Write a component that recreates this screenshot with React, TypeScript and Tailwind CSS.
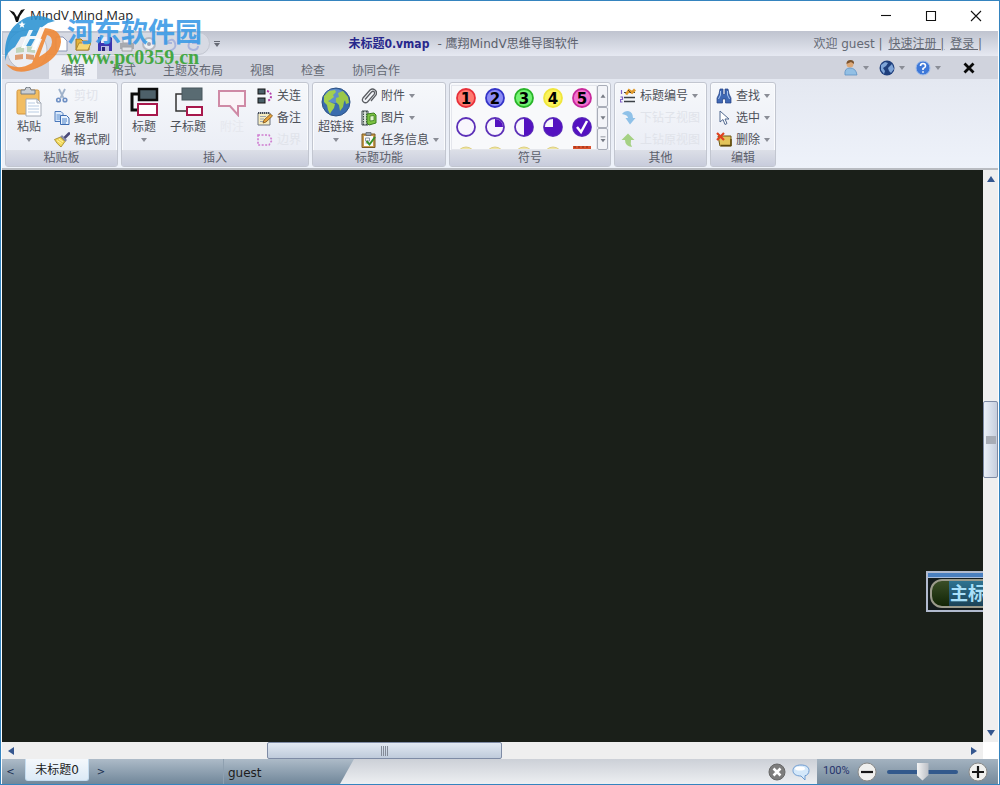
import type { ReactNode } from "react";

const uiFont = "font-['DejaVu_Sans','Noto_Sans_CJK_SC',sans-serif]";

const Arrow = ({ className = "" }: { className?: string }) => (
  <svg viewBox="0 0 6 4" className={`w-[6px] h-[4px] shrink-0 ${className}`}>
    <path d="M0 0h6L3 4z" fill="#8a8d96" />
  </svg>
);

const Icon = ({ children, size = "w-4 h-4" }: { children: ReactNode; size?: string }) => (
  <svg viewBox="0 0 16 16" className={`${size} shrink-0`} fill="none">{children}</svg>
);

/* ---------- small icons ---------- */

const CutIcon = () => (
  <Icon>
    <path d="M5 1l4.500 9M11 1L6.500 10" stroke="#9fb2cb" strokeWidth="1.8" />
    <circle cx="4.500" cy="12" r="1.800" stroke="#6f90c4" strokeWidth="1.6" />
    <circle cx="11" cy="12" r="1.800" stroke="#6f90c4" strokeWidth="1.6" />
  </Icon>
);

const CopyIcon = () => (
  <Icon>
    <path d="M1 1.500h6l2 2v8H1z" fill="#dbe9fa" stroke="#4a78bb" />
    <path d="M2.500 5h4M2.500 7h4M2.500 9h4" stroke="#5b8ed0" />
    <path d="M6.500 5.500h6l2.500 2.500v6.500H6.500z" fill="#e8f2fd" stroke="#3d6cb2" />
    <path d="M8 9h5M8 11h5M8 13h4" stroke="#4a80c8" />
  </Icon>
);

const BrushIcon = () => (
  <Icon>
    <path d="M15 1.500l-4 4" stroke="#4b4a78" strokeWidth="2.600" strokeLinecap="round" />
    <path d="M8 3.500l4.500 4.500-1.500 1.500L6.500 5z" fill="#8a8fb0" stroke="#5d6288" strokeWidth=".6" />
    <path d="M6.500 5L11 9.500 7 15Q3 12 .5 7.500z" fill="#f0d75a" stroke="#a08424" strokeWidth=".8" />
    <path d="M3 8.500l4.500 3M5 7l4 3" stroke="#fff3a8" />
  </Icon>
);

const LinkTopicsIcon = () => (
  <Icon>
    <rect x="1" y="1" width="7" height="5" fill="#4a5f68" stroke="#161616" />
    <rect x="1" y="10" width="7" height="5" fill="#4a5f68" stroke="#161616" />
    <path d="M10 3q4 1 4 5t-4 5" stroke="#b23aa8" strokeWidth="2" strokeDasharray="2 1.500" />
  </Icon>
);

const NoteIcon = () => (
  <Icon>
    <path d="M1 3h12v12H1z" fill="#f6ecc0" stroke="#6b7280" />
    <path d="M1 3h12" stroke="#444b58" strokeWidth="2" strokeDasharray="1 1" />
    <path d="M3 6.500h6M3 9h4M3 11.500h4" stroke="#9aa2ad" />
    <path d="M6 13l1-3 6.500-6 2 2L9 12z" fill="#e7a23a" stroke="#79511b" strokeWidth=".8" />
  </Icon>
);

const BoundaryIcon = () => (
  <Icon>
    <path d="M1 3h11l3 5-3 5H1z" stroke="#cf7bd0" strokeWidth="1.600" strokeDasharray="2 1.500" />
  </Icon>
);

const ClipIcon = () => (
  <Icon>
    <path d="M4 11.500L10.500 4q1.500-1.300 2.600-.2t0 2.600L6.500 14q-2 1.500-4 0t-.5-4L9 2q2.500-2 5 0t1 5l-5 6" stroke="#5a5d62" strokeWidth="1.300" />
  </Icon>
);

const PictureIcon = () => (
  <Icon>
    <path d="M1 1h6v14H1z" fill="#d8e0d8" stroke="#3c4a4a" />
    <path d="M2.500 1v14M5.500 1v14" stroke="#3c4a4a" strokeDasharray="1.500 1" />
    <path d="M6 4l7-1 2 2v8l-7 2-2-2z" fill="#7cc242" stroke="#3b7d1e" />
    <path d="M9 6l4-.5v5L9 11z" fill="#e4f5cf" stroke="#3b7d1e" strokeWidth=".8" />
  </Icon>
);

const TaskIcon = () => (
  <Icon>
    <path d="M1 2h13v13.500H1z" fill="#c79a4b" stroke="#7b5a22" />
    <path d="M3 4h9v10H3z" fill="#fafafa" />
    <path d="M5 .5h5v3H5z" fill="#9ba3ad" stroke="#5e6670" strokeWidth=".8" />
    <path d="M4.500 6h4v3h-4zM4.500 11h3" stroke="#8a97a8" />
    <path d="M5.500 9l3 3.500L14 5" stroke="#39912b" strokeWidth="2" />
  </Icon>
);

const NumberingIcon = () => (
  <Icon>
    <path d="M1.500 2v4M.5 9h2v2.500h-2V14h2" stroke="#8060c8" strokeWidth="1.200" />
    <path d="M4 9.500h11M4 13.500h11" stroke="#3b4046" strokeWidth="1.500" />
    <path d="M4 4.500h11" stroke="#3b4046" />
    <path d="M6 6.500l3-4 3 2 3-3" stroke="#e09a2c" strokeWidth="2.800" />
    <path d="M8 2l3 3" stroke="#5c4520" />
  </Icon>
);

const DrillDownIcon = () => (
  <Icon>
    <path d="M2 4q2-3 6-3 5 1 5 7h2.500L10 14.500 5.500 8H8q0-3-6-4z" fill="#8fc1e8" />
  </Icon>
);

const DrillUpIcon = () => (
  <Icon>
    <path d="M12 15q-7-1-7-7H1.500L8 1.500 14.500 8H11q-1 4 1 7z" fill="#a5d184" />
  </Icon>
);

const FindIcon = () => (
  <Icon>
    <path d="M4 1h3v5l1 1 1-1V1h3l1 5 2 4v5H9.500v-4h-3v4H1v-5l2-4z" fill="#3f68b4" stroke="#233f83" strokeWidth=".7" />
    <path d="M4.500 3v4l-2 4M11.500 3v4l2 4" stroke="#a8c6f1" />
  </Icon>
);

const PointerIcon = () => (
  <Icon>
    <path d="M4 1v11l3-2.500L9 14.500l2-1L9 9h4z" fill="#fff" stroke="#51688f" />
  </Icon>
);

const DeleteIcon = () => (
  <Icon>
    <path d="M2 4h13v10H4z" fill="#e2c45b" stroke="#6d5510" />
    <path d="M5 13.500h10V7" stroke="#5d480c" strokeWidth="1.400" />
    <path d="M1 1l7 7M8 1L1 8" stroke="#e0421f" strokeWidth="2.200" />
  </Icon>
);

/* ---------- large icons ---------- */

const PasteIcon = () => (
  <svg viewBox="0 0 28 30" className="w-7 h-[30px]" fill="none">
    <rect x="2" y="3" width="22" height="24" rx="1.500" fill="#f2bd62" stroke="#d4943a" />
    <path d="M6 3h4q0-3 3-3t3 3h4v4H6z" fill="#c9ced4" stroke="#777e86" />
    <path d="M11 12h11l4 4v13H11z" fill="#fdfeff" stroke="#a4abb6" />
    <path d="M22 12v4h4" stroke="#a4abb6" />
    <path d="M13 16h7M13 19h11M13 22h11M13 25h11" stroke="#b9cce3" />
  </svg>
);

const TopicIcon = ({ sub = false }: { sub?: boolean }) => (
  <svg viewBox="0 0 30 30" className="w-[30px] h-[30px]" fill="none">
    {sub ? (
      <>
        <path d="M10 7H3v17h11" stroke="#333" strokeWidth="1.500" />
        <rect x="9" y="1" width="20" height="12" fill="#596b72" stroke="#49575c" />
        <rect x="14" y="20" width="15" height="8" fill="#fff" stroke="#a8184c" strokeWidth="2" />
      </>
    ) : (
      <>
        <path d="M10 7H3v16h7" stroke="#0c0c0c" strokeWidth="3" />
        <rect x="10" y="2" width="18" height="11" fill="#4d6069" stroke="#0c0c0c" strokeWidth="2.500" />
        <rect x="9" y="17" width="19" height="11" fill="#fff" stroke="#a8184c" strokeWidth="2" />
      </>
    )}
  </svg>
);

const CalloutIcon = () => (
  <svg viewBox="0 0 30 30" className="w-[30px] h-[30px]" fill="none">
    <path d="M2 4h26v15H21v9l-8-9H2z" fill="#fbf4f8" stroke="#cf8aa6" strokeWidth="2" />
  </svg>
);

const GlobeIcon = () => (
  <svg viewBox="0 0 30 30" className="w-[30px] h-[30px]">
    <circle cx="15" cy="15" r="14" fill="#3a6cae" stroke="#2d5286" />
    <ellipse cx="14" cy="9" rx="10" ry="7" fill="#79a6dc" opacity=".6" />
    <path d="M3 9l5-5 6-1 1 2-3 3 1 2-4 3-2 1 4 2 3 1-1 4-3 4-1 2-2-4-1-5-3-3z" fill="#a4cf4e" />
    <path d="M17 6l5-2 5 6 1 6-3 1-1-4-1 2-1 5-3 4-1-6-3-3 0-4 3-1z" fill="#9bc848" />
  </svg>
);

/* ---------- ribbon pieces ---------- */

const Group = ({ label, children, className = "" }: { label: string; children: ReactNode; className?: string }) => (
  <section className={`flex flex-col rounded-[3px] border border-[#c2c6d0] bg-gradient-to-b from-[#f6f8fb] to-[#e8ebf4] shadow-[inset_0_0_0_1px_#fafbfd] ${className}`}>
    <div className="flex h-[67px] pt-0.5">{children}</div>
    <h2 className="h-4 bg-gradient-to-b from-[#dcdfe7] to-[#c8ccdc] text-center text-[12px] leading-[17px] text-[#5c606c]">{label}</h2>
  </section>
);

const Large = ({ label, icon, arrow, faint, className = "w-11" }: { label: string; icon: ReactNode; arrow?: boolean; faint?: boolean; className?: string }) => (
  <button className={`flex flex-col items-center pt-0.5 ${className}`}>
    {icon}
    <span className={`mt-0.5 text-[12px] leading-4 whitespace-nowrap ${faint ? "text-[#e6e8ee]" : "text-[#4d5058]"}`}>{label}</span>
    {arrow && <Arrow className="mt-[3px]" />}
  </button>
);

const Small = ({ label, icon, arrow, faint }: { label: string; icon: ReactNode; arrow?: boolean; faint?: boolean }) => (
  <button className="flex h-[22px] w-full items-center gap-1 pr-1 text-left">
    {icon}
    <span className={`text-[12px] leading-4 whitespace-nowrap ${faint ? "text-[#e0e3ea]" : "text-[#4d5058]"}`}>{label}</span>
    {arrow && <Arrow />}
  </button>
);

const balls = [
  ["1", "#e8303a", "#ff7a70"],
  ["2", "#3434c8", "#8c8cf5"],
  ["3", "#28b428", "#74f374"],
  ["4", "#f0e63c", "#fbf45c"],
  ["5", "#c8289c", "#f372cf"],
];

const NumberBall = ({ n, ring, fill }: { n: string; ring: string; fill: string }) => (
  <svg viewBox="0 0 20 20" className="h-5 w-5">
    <circle cx="10" cy="10" r="9" fill={fill} stroke={ring} strokeWidth="1.800" />
    <text x="10" y="15.500" textAnchor="middle" fontSize="15" fontWeight="bold" fontFamily="DejaVu Sans">{n}</text>
  </svg>
);

const progress = [
  "",
  "M10 10V2a8 8 0 0 1 8 8z",
  "M10 1a9 9 0 0 1 0 18z",
  "M10 10V1a9 9 0 1 1-9 9z",
  "M1 10a9 9 0 1 0 18 0 9 9 0 1 0-18 0z",
];

const ProgressBall = ({ d, done }: { d: string; done?: boolean }) => (
  <svg viewBox="0 0 20 20" className="h-5 w-5">
    <circle cx="10" cy="10" r="9" fill="#f8f6fd" stroke="#5c30b8" strokeWidth="1.800" />
    <path d={d} fill="#5412c0" />
    {done && <path d="M5 10l4 5 6-11" fill="none" stroke="#fff" strokeWidth="2.500" />}
  </svg>
);

const SymbolGallery = () => (
  <div className="flex flex-1 pr-0.5 pl-px">
    <div className="grid flex-1 grid-cols-5 auto-rows-[29px] justify-items-center overflow-hidden border border-[#e4e6ec] bg-[#f8f9fb] *:mt-0.5">
      {balls.map(([n, ring, fill]) => <NumberBall key={n} n={n} ring={ring} fill={fill} />)}
      {progress.map((d, i) => <ProgressBall key={i} d={d} done={i === 4} />)}
      {[0, 1, 2, 3].map((i) => (
        <svg key={i} viewBox="0 0 20 20" className="h-5 w-5">
          <circle cx="10" cy="10" r="9" fill="#eee5a2" stroke="#ddcf82" />
        </svg>
      ))}
      <svg viewBox="0 0 20 20" className="h-5 w-5">
        <path d="M1 0h18v16H1z" fill="#d8502c" />
        <path d="M2 1h16" stroke="#8c2c14" strokeDasharray="2 2" />
      </svg>
    </div>
    <div className="flex w-[11px] flex-col">
      {["M3 8l3-4 3 4z", "M3 4h6L6 8z", "M3 3h6v1H3zM3 6h6l-3 4z"].map((d, i) => (
        <button key={i} aria-label={["previous row", "next row", "more symbols"][i]} className="flex flex-1 items-center justify-center rounded-[2px] border border-[#a9adb8] bg-[#f3f4f8]">
          <svg viewBox="0 0 12 12" className="h-[10px] w-[10px] shrink-0"><path d={d} fill="#777b85" /></svg>
        </button>
      ))}
    </div>
  </div>
);

const Ribbon = () => (
  <div className="flex gap-[3px] border-b-2 border-[#b9bcc2] bg-gradient-to-b from-[#e4e8f1] to-[#eef2fa] px-[3px] pt-[3px] pb-px">
    <Group label="粘贴板" className="w-[113px]">
      <Large label="粘贴" icon={<PasteIcon />} arrow className="w-[46px]" />
      <div className="pl-0.5">
        <Small label="剪切" icon={<CutIcon />} faint />
        <Small label="复制" icon={<CopyIcon />} />
        <Small label="格式刷" icon={<BrushIcon />} />
      </div>
    </Group>
    <Group label="插入" className="w-[188px]">
      <Large label="标题" icon={<TopicIcon />} arrow />
      <Large label="子标题" icon={<TopicIcon sub />} />
      <Large label="附注" icon={<CalloutIcon />} faint />
      <div className="pl-[3px]">
        <Small label="关连" icon={<LinkTopicsIcon />} />
        <Small label="备注" icon={<NoteIcon />} />
        <Small label="边界" icon={<BoundaryIcon />} faint />
      </div>
    </Group>
    <Group label="标题功能" className="w-[134px]">
      <Large label="超链接" icon={<GlobeIcon />} arrow className="w-[46px]" />
      <div className="pl-0.5">
        <Small label="附件" icon={<ClipIcon />} arrow />
        <Small label="图片" icon={<PictureIcon />} arrow />
        <Small label="任务信息" icon={<TaskIcon />} arrow />
      </div>
    </Group>
    <Group label="符号" className="w-[162px]">
      <SymbolGallery />
    </Group>
    <Group label="其他" className="w-[93px]">
      <div className="pl-[5px]">
        <Small label="标题编号" icon={<NumberingIcon />} arrow />
        <Small label="下钻子视图" icon={<DrillDownIcon />} faint />
        <Small label="上钻原视图" icon={<DrillUpIcon />} faint />
      </div>
    </Group>
    <Group label="编辑" className="w-[66px]">
      <div className="pl-[5px]">
        <Small label="查找" icon={<FindIcon />} arrow />
        <Small label="选中" icon={<PointerIcon />} arrow />
        <Small label="删除" icon={<DeleteIcon />} arrow />
      </div>
    </Group>
  </div>
);

/* ---------- window chrome ---------- */

const TitleBar = () => (
  <div className="flex h-[30px] items-center bg-white pl-[7px]">
    <svg viewBox="0 0 16 16" className="h-4 w-4"><path d="M0 2l5 2 3 5 4-7 4-1-5 7-2 6H7L5 8z" fill="#111" /></svg>
    <h1 className="ml-[5px] flex-1 font-['Open_Sans',sans-serif] text-[13px] text-[#222]">MindV Mind Map</h1>
    <div className="flex">
      {["M1 5.500h10", "M1.500 1.500h9v9h-9z", "M1 1l10 10M11 1L1 11"].map((d, i) => (
        <button key={d} aria-label={["minimize", "maximize", "close"][i]} className="flex h-[30px] w-[45px] items-center justify-center">
          <svg viewBox="0 0 12 12" className="h-3 w-3"><path d={d} fill="none" stroke="#111" strokeWidth="1.100" /></svg>
        </button>
      ))}
    </div>
  </div>
);

const QuickAccess = () => (
  <div className="flex items-center">
    <div className="flex h-[23px] items-center gap-1.5 rounded-r-full border border-[#c3c7d1] bg-[#d7dae3] pr-2 pl-[50px]">
      <button aria-label="new"><Icon><path d="M3 1h7l4 4v10H3z" fill="#fff" stroke="#8d97b5" /></Icon></button>
      <button aria-label="open"><Icon><path d="M1 3h5l2 2h6v9H1z" fill="#e5b23c" stroke="#9b7420" /><path d="M1 14l3-7h12l-3 7z" fill="#f8d873" stroke="#a57f2a" strokeWidth=".8" /></Icon></button>
      <button aria-label="save"><Icon><path d="M1 1h13l1 1v13H1z" fill="#3d35b0" /><path d="M4 1h8v6H4z" fill="#e9ecfa" /><path d="M4 10h8v5H4z" fill="#b9bbe0" /><path d="M5 11h3v4H5z" fill="#28237c" /></Icon></button>
      <button aria-label="print"><Icon><path d="M4 2h8v5H4z" fill="#f3f3f3" stroke="#a0a3a8" /><path d="M1 7h14v6H1z" fill="#a7aaaf" /><path d="M3 11h10v4H3z" fill="#e1e3e6" stroke="#a0a3a8" /></Icon></button>
      <button aria-label="preview"><Icon><circle cx="8" cy="8" r="6" fill="#eef0f4" stroke="#b4b8c2" strokeWidth="2" /><circle cx="8" cy="8" r="2" fill="#9da2b0" /></Icon></button>
      <button aria-label="undo"><Icon><path d="M3 1v6h6M4 6q6-5 8 1t-6 8" stroke="#a9b4dc" strokeWidth="2" /></Icon></button>
      <button aria-label="redo"><Icon><path d="M13 1v6H7M12 6Q6 1 4 7t4 7q5 0 5-4" stroke="#a9b4dc" strokeWidth="2" /></Icon></button>
    </div>
    <svg viewBox="0 0 6 6" className="ml-1 h-1.5 w-1.5"><path d="M0 0h6v1H0zM0 2h6L3 6z" fill="#666a75" /></svg>
  </div>
);

const Header = () => (
  <header className="flex h-[25px] items-center bg-gradient-to-b from-[#bfc3cf] to-[#e6e9f2] pr-4 text-[12px]">
    <div className="grow-[347] basis-0"><QuickAccess /></div>
    <p className="whitespace-nowrap text-[#5b606c]">
      <span className="mr-2 font-['DejaVu_Sans_Condensed','DejaVu_Sans','Noto_Sans_CJK_SC',sans-serif] font-bold text-[#28288c]">未标题0.vmap</span>
      - 鹰翔MindV思维导图软件
    </p>
    <p className="grow-[404] basis-0 text-right whitespace-nowrap text-[#656a75] [&_a]:ml-0.5 [&_a]:underline">
      欢迎 guest | <a href="#register">快速注册 |</a> <a href="#login">登录 |</a>
    </p>
  </header>
);

const tabs = ["编辑", "格式", "主题及布局", "视图", "检查", "协同合作"];

const TabRow = () => (
  <nav className="flex h-[23px] items-center bg-[#d0d3dd] pl-[47px] text-[12px]">
    <div className="flex flex-1 gap-[3px] self-stretch">
      {tabs.map((tab, i) => (
        <button key={tab} className={`px-3 pt-1.5 text-[#636873] ${i === 0 ? "rounded-t-[3px] bg-[#eef0f6]" : ""}`}>{tab}</button>
      ))}
    </div>
    <div className="flex items-center pr-[23px]">
      <button aria-label="user" className="flex w-9 items-center gap-1">
        <Icon><circle cx="7" cy="4" r="3.500" fill="#dca878" /><path d="M3.500 4q0-4 4-4t3.500 4l-3-2z" fill="#7a5430" /><path d="M2 15q-1-7 5-7t7 7z" fill="#92bfe4" stroke="#5e93c4" strokeWidth=".8" /></Icon>
        <Arrow />
      </button>
      <button aria-label="web" className="flex w-9 items-center gap-1">
        <Icon><circle cx="8" cy="8" r="7.500" fill="#1f3f7c" /><path d="M2 5l4-3 3 1-2 3-3 2 2 3-1 3-3-4zM9 8l4-4 2 5-3 4-2-2z" fill="#7fa5d8" /></Icon>
        <Arrow />
      </button>
      <button aria-label="help" className="flex w-12 items-center gap-1">
        <Icon>
          <circle cx="8" cy="8" r="7" fill="#3e78d8" stroke="#a3bfe9" />
          <path d="M5.500 6q0-2.500 2.500-2.500T10.500 6Q10.500 7.500 8 8.500v1.500M8 11.200v1.500" stroke="#fff" strokeWidth="1.600" />
        </Icon>
        <Arrow />
      </button>
      <button aria-label="close document"><svg viewBox="0 0 12 12" className="h-3 w-3"><path d="M1.500 1.500l9 9M10.500 1.500l-9 9" stroke="#080808" strokeWidth="2.800" /></svg></button>
    </div>
  </nav>
);

const Workspace = () => (
  <div className="flex min-h-0 flex-1">
    <main className="relative flex-1 overflow-hidden bg-[#1a1f19]">
      <div className="absolute -right-6 bottom-[130px] h-[41px] w-[81px] border-2 border-[#b1bace] bg-[#141b1c]">
        <div className="h-[5px] border-b border-[#a8bddc] bg-[#4a80c0]" />
        <div className="mt-px ml-0.5 flex h-[29px] items-center rounded-[12px] border-2 border-[#9b9b8c] bg-gradient-to-b from-[#3a4e27] to-[#122506] pl-[17px]">
          <span className="flex h-full w-full items-center bg-gradient-to-b from-[#2f7391] to-[#1b4358] pl-px text-[18px] font-bold whitespace-nowrap text-[#a9e0fa]">主标</span>
        </div>
      </div>
    </main>
    <div className="flex w-[15px] flex-col bg-[#efefef]">
      <button aria-label="scroll up" className="flex h-[18px] items-center justify-center"><svg viewBox="0 0 8 6" className="h-1.5 w-2"><path d="M0 6l4-6 4 6z" fill="#35578f" /></svg></button>
      <div className="grow-[213]" />
      <div className="flex h-[77px] items-center justify-center rounded-[2px] border border-[#7e8ba5] bg-gradient-to-r from-[#eaf0f8] to-[#c6cedd]"><div className="h-2 w-2.5 bg-[#a7acb6]" /></div>
      <div className="grow-[246]" />
      <button aria-label="scroll down" className="flex h-[18px] items-center justify-center"><svg viewBox="0 0 8 6" className="h-1.5 w-2"><path d="M0 0h8L4 6z" fill="#35578f" /></svg></button>
    </div>
  </div>
);

const HorizontalScroll = () => (
  <div className="flex h-[17px] bg-[#efefef]">
    <button aria-label="scroll left" className="flex w-[18px] items-center justify-center"><svg viewBox="0 0 6 8" className="h-2 w-1.5"><path d="M6 0v8L0 4z" fill="#35578f" /></svg></button>
    <div className="grow-[247]" />
    <div className="flex w-[235px] items-center justify-center gap-px rounded-[2px] border border-[#7e8ba5] bg-gradient-to-b from-[#e2e9f2] to-[#bfcbdb]">
      {[0, 1, 2, 3].map((i) => <div key={i} className="h-2.5 w-px bg-[#848b98]" />)}
    </div>
    <div className="grow-[463]" />
    <button aria-label="scroll right" className="flex w-[18px] items-center justify-center"><svg viewBox="0 0 6 8" className="h-2 w-1.5"><path d="M0 0v8l6-4z" fill="#35578f" /></svg></button>
    <div className="w-[15px] bg-white" />
  </div>
);

const StatusBar = () => (
  <footer className="flex h-[25px] bg-gradient-to-b from-[#ccd0d7] to-[#edeff2] text-[12px]">
    <div className="flex w-[352px] bg-gradient-to-b from-[#adbbc8] to-[#71879a] text-[#1c1c1c] [clip-path:polygon(0_0,100%_0,338px_100%,0_100%)]">
      <div className="flex w-[222px] border-r border-[#8fa0b0]">
        <button aria-label="previous" className="w-[23px] pr-1.5 text-[10px] text-[#1d3052]">&lt;</button>
        <button className="h-[22px] w-16 rounded-b-[3px] border border-t-0 border-[#c5dcef] bg-gradient-to-b from-[#f4f8fc] to-[#dceaf6] leading-5">未标题0</button>
        <button aria-label="next" className="w-6 text-[10px] text-[#1d3052]">&gt;</button>
      </div>
      <p className="pt-0.5 pl-1 leading-6">guest</p>
    </div>
    <div className="flex flex-1 items-center justify-end gap-1.5 pr-[7px]">
      <button aria-label="disconnect"><svg viewBox="0 0 18 18" className="h-[18px] w-[18px]"><circle cx="9" cy="9" r="8" fill="#7d7d7d" stroke="#686868" /><path d="M5.500 5.500l7 7M12.500 5.500l-7 7" stroke="#fff" strokeWidth="2.500" /></svg></button>
      <button aria-label="chat"><svg viewBox="0 0 18 18" className="h-[18px] w-[18px]"><path d="M9 2c5 0 8 2 8 5.500 0 3-2 5-4 5.200L13 17l-4-4C4 13 1 11 1 7.500S4 2 9 2z" fill="#d4e8fa" stroke="#6d9bd0" /><ellipse cx="8" cy="5.500" rx="5" ry="2" fill="#fff" /></svg></button>
    </div>
    <div className="flex w-[181px] items-center bg-gradient-to-b from-[#a3b2c0] to-[#768a9b] pl-1.5">
      <label htmlFor="zoom" className="w-[34px] font-['Roboto',sans-serif] text-[11px] text-[#27346c]">100%</label>
      <button aria-label="zoom out"><svg viewBox="0 0 20 20" className="h-5 w-5"><circle cx="10" cy="10" r="9" fill="#f0f0ee" stroke="#8a8a88" /><path d="M4 10h12" stroke="#161616" strokeWidth="2.200" /></svg></button>
      <input
        id="zoom"
        type="range"
        defaultValue={50}
        className="mx-2.5 h-5 min-w-0 flex-1 appearance-none bg-transparent [&::-webkit-slider-runnable-track]:h-1 [&::-webkit-slider-runnable-track]:rounded-full [&::-webkit-slider-runnable-track]:bg-[#33598c] [&::-webkit-slider-thumb]:-mt-[7px] [&::-webkit-slider-thumb]:h-[18px] [&::-webkit-slider-thumb]:w-3 [&::-webkit-slider-thumb]:appearance-none [&::-webkit-slider-thumb]:bg-gradient-to-r [&::-webkit-slider-thumb]:from-[#f4f4f4] [&::-webkit-slider-thumb]:to-[#b9bdc4] [&::-webkit-slider-thumb]:[clip-path:polygon(0_0,100%_0,100%_70%,50%_100%,0_70%)]"
      />
      <button aria-label="zoom in" className="mr-2.5"><svg viewBox="0 0 20 20" className="h-5 w-5"><circle cx="10" cy="10" r="9" fill="#f0f0ee" stroke="#8a8a88" /><path d="M4 10h12M10 4v12" stroke="#161616" strokeWidth="2.200" /></svg></button>
    </div>
  </footer>
);

const Watermark = () => (
  <div className="pointer-events-none absolute top-3 left-1 flex">
    <svg viewBox="0 0 58 60" className="h-[60px] w-[58px]">
      <circle cx="22" cy="37" r="20" fill="#eceef3" stroke="#b9bdc9" />
      <path d="M11 35l8-2v6l-8 1zM22 33l8 1v6l-8-1z" fill="#7fae6b" opacity=".4" />
      <path d="M10 42l8-1v5l-8 1zM21 41l8 1v5l-8-1z" fill="#d97a3c" opacity=".7" />
      <path d="M0 48Q-2 20 14 9 28-3 50 8L43 10 36 15 26 33H18L22 23 16 24 10 34Q2 38 0 48z" fill="#2a92d2" opacity=".88" />
      <path d="M35 15Q56 14 56 29 54 46 32 55 10 64 1 51 14 58 27 50L37 26 31 25zM42 22L34 44Q47 37 47 29 47 23 42 22z" fill="#ef8a3a" opacity=".92" />
      <path d="M35 14l5 1-9 22h-5l5-11h-6l-5 9h-4l8-18h4l-3 6h6z" fill="#fff" opacity=".9" />
      <path d="M17 8l1 2.500 2.500.2-2 1.600.7 2.500L17 13.400l-2.200 1.400.7-2.500-2-1.600 2.500-.2z" fill="#fff" />
    </svg>
    <div className="ml-1 flex flex-col">
      <span className="font-['Noto_Sans_CJK_SC',sans-serif] text-[27px] leading-9 font-bold text-[#3c9be6] opacity-90">河东软件园</span>
      <span className="font-['Liberation_Serif',serif] text-[20px] leading-4 font-bold text-[#45a845]">www.pc0359.cn</span>
    </div>
  </div>
);

const App = () => (
  <div className={`relative flex h-screen flex-col overflow-hidden border border-[#3584bf] px-px ${uiFont}`}>
    <TitleBar />
    <Header />
    <TabRow />
    <Ribbon />
    <Workspace />
    <HorizontalScroll />
    <StatusBar />
    <Watermark />
  </div>
);

export default App;
